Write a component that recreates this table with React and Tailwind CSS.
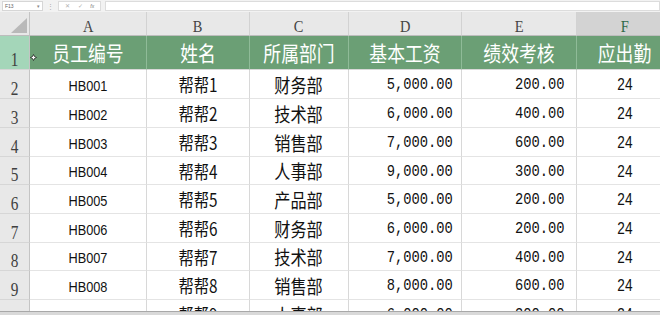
import React from "react";

const rows = [
  ["HB001", "帮帮1", "财务部", "5,000.00", "200.00", "24"],
  ["HB002", "帮帮2", "技术部", "6,000.00", "400.00", "24"],
  ["HB003", "帮帮3", "销售部", "7,000.00", "600.00", "24"],
  ["HB004", "帮帮4", "人事部", "9,000.00", "300.00", "24"],
  ["HB005", "帮帮5", "产品部", "5,000.00", "200.00", "24"],
  ["HB006", "帮帮6", "财务部", "6,000.00", "200.00", "24"],
  ["HB007", "帮帮7", "技术部", "7,000.00", "400.00", "24"],
  ["HB008", "帮帮8", "销售部", "8,000.00", "600.00", "24"],
  ["HB009", "帮帮9", "人事部", "6,000.00", "300.00", "24"],
];
const heights = [29, 29, 29, 28, 29, 29, 28, 29, 29];

const serif = "font-['Liberation_Serif',serif]";
const cjk = "font-['Noto_Sans_CJK_SC',sans-serif]";

function ColHead({ children, active }) {
  return (
    <div
      className={`flex items-end justify-center border-r border-[#d2d2d2] border-b border-b-[#bdbdbd] ${
        active ? "bg-[#d3d3d3] text-[#2e6a48]" : "bg-[#e8e8e8] text-[#444]"
      }`}
    >
      <span className={`${serif} inline-block scale-x-[0.85] text-[17px] leading-none`}>{children}</span>
    </div>
  );
}

function RowHead({ n, h, mint }) {
  return (
    <div
      style={{ height: h }}
      className={`flex items-end justify-center border-r border-[#c4c4c4] border-b border-b-[#d6d6d6] ${
        mint ? "bg-[#a4d6b9]" : "bg-[#e8e8e8]"
      }`}
    >
      <span className={`${serif} inline-block scale-x-[0.85] text-[18px] leading-none text-[#404040]`}>{n}</span>
    </div>
  );
}

function Cell({ children, align = "center", pr = "", h }) {
  const j = align === "right" ? "justify-end" : "justify-center";
  return (
    <div
      style={{ height: h }}
      className={`flex items-center ${j} ${pr} border-r border-[#d8d8d8] border-b border-b-[#e4e4e4] bg-white overflow-hidden`}
    >
      {children}
    </div>
  );
}

export default function App() {
  return (
    <div className="w-[660px] h-[315px] overflow-hidden flex flex-col bg-white">
      {/* formula bar */}
      <div className="h-[12px] shrink-0 bg-[#f2f2f2] flex items-center pl-[2px] gap-[4px] font-['Liberation_Sans',sans-serif] text-[#666]">
        <div className="w-[41px] h-[10px] bg-white border border-[#d6d6d6] flex items-center justify-between px-[2px]">
          <span className="text-[5px] leading-none">F13</span>
          <span className="text-[5px] leading-none text-[#888]">▾</span>
        </div>
        <span className="text-[7px] leading-none text-[#aaa]">⋮</span>
        <div className="w-[43px] h-[10px] bg-white border border-[#dcdcdc] flex items-center justify-around px-[2px]">
          <span className="text-[6px] leading-none text-[#b0b0b0]">✕</span>
          <span className="text-[6px] leading-none text-[#b0b0b0]">✓</span>
          <span className="text-[5px] leading-none italic text-[#777]">fx</span>
        </div>
        <div className="flex-1 h-[10px] bg-white border border-[#dcdcdc]" />
      </div>

      {/* sheet */}
      <div className="h-[299px] shrink-0 overflow-hidden">
        <div className="w-[673px] grid grid-cols-[30px_117px_103px_99px_113px_115px_96px] grid-rows-[24px]">
          {/* column headers */}
          <div className="relative bg-[#e8e8e8] border-r border-[#c4c4c4] border-b border-b-[#bdbdbd]">
            <svg className="absolute left-[11px] top-[6px]" width="17" height="16" viewBox="0 0 17 16">
              <polygon points="0,15 16,15 16,0" fill="#b9b9b9" />
            </svg>
          </div>
          <ColHead>A</ColHead>
          <ColHead>B</ColHead>
          <ColHead>C</ColHead>
          <ColHead>D</ColHead>
          <ColHead>E</ColHead>
          <ColHead active>F</ColHead>

          {/* header row */}
          <RowHead n="1" h={34} mint />
          {["员工编号", "姓名", "所属部门", "基本工资", "绩效考核", "应出勤"].map((t, i) => (
            <div
              key={t}
              className="relative h-[34px] flex items-center justify-center bg-[#6b9f75] border-r border-[#8fbb98] border-b border-b-[#d8d8d8]"
            >
              {i === 0 && (
                <svg className="absolute left-[0px] top-[18px]" width="7" height="7" viewBox="0 0 7 7">
                  <path d="M3.5 0.5 L4.5 2.5 L6.5 3.5 L4.5 4.5 L3.5 6.5 L2.5 4.5 L0.5 3.5 L2.5 2.5 Z" fill="#fff" stroke="#222" strokeWidth="0.8" />
                </svg>
              )}
              <span className={`${cjk} inline-block scale-x-[0.85] text-[21px] leading-none text-white`}>{t}</span>
            </div>
          ))}

          {/* data rows */}
          {rows.map((r, i) => {
            const h = heights[i];
            return (
              <React.Fragment key={r[0]}>
                <RowHead n={String(i + 2)} h={h} />
                <Cell h={h}>
                  <span className="font-['Liberation_Sans',sans-serif] inline-block scale-x-[0.85] text-[15px] leading-none text-[#111] pt-[2px]">
                    {r[0]}
                  </span>
                </Cell>
                <Cell h={h}>
                  <span className={`${cjk} inline-block scale-x-[0.85] text-[18px] leading-none text-[#111]`}>{r[1]}</span>
                </Cell>
                <Cell h={h}>
                  <span className={`${cjk} inline-block scale-x-[0.85] text-[19px] leading-none text-[#111]`}>{r[2]}</span>
                </Cell>
                <Cell h={h} align="right" pr="pr-[8px]">
                  <span className="font-['Liberation_Mono',monospace] inline-block origin-right scale-x-[0.86] text-[16px] leading-none text-[#111] pt-[2px]">
                    {r[3]}
                  </span>
                </Cell>
                <Cell h={h} align="right" pr="pr-[11px]">
                  <span className="font-['Liberation_Mono',monospace] inline-block origin-right scale-x-[0.86] text-[16px] leading-none text-[#111] pt-[2px]">
                    {r[4]}
                  </span>
                </Cell>
                <Cell h={h}>
                  <span className="font-['Liberation_Sans',sans-serif] inline-block scale-x-[0.85] text-[16px] leading-none text-[#111] pt-[2px]">
                    {r[5]}
                  </span>
                </Cell>
              </React.Fragment>
            );
          })}
        </div>
      </div>

      {/* bottom bar */}
      <div className="h-[4px] shrink-0 bg-[#d9d9d9] border-t border-[#a8a8a8]" />
    </div>
  );
}
